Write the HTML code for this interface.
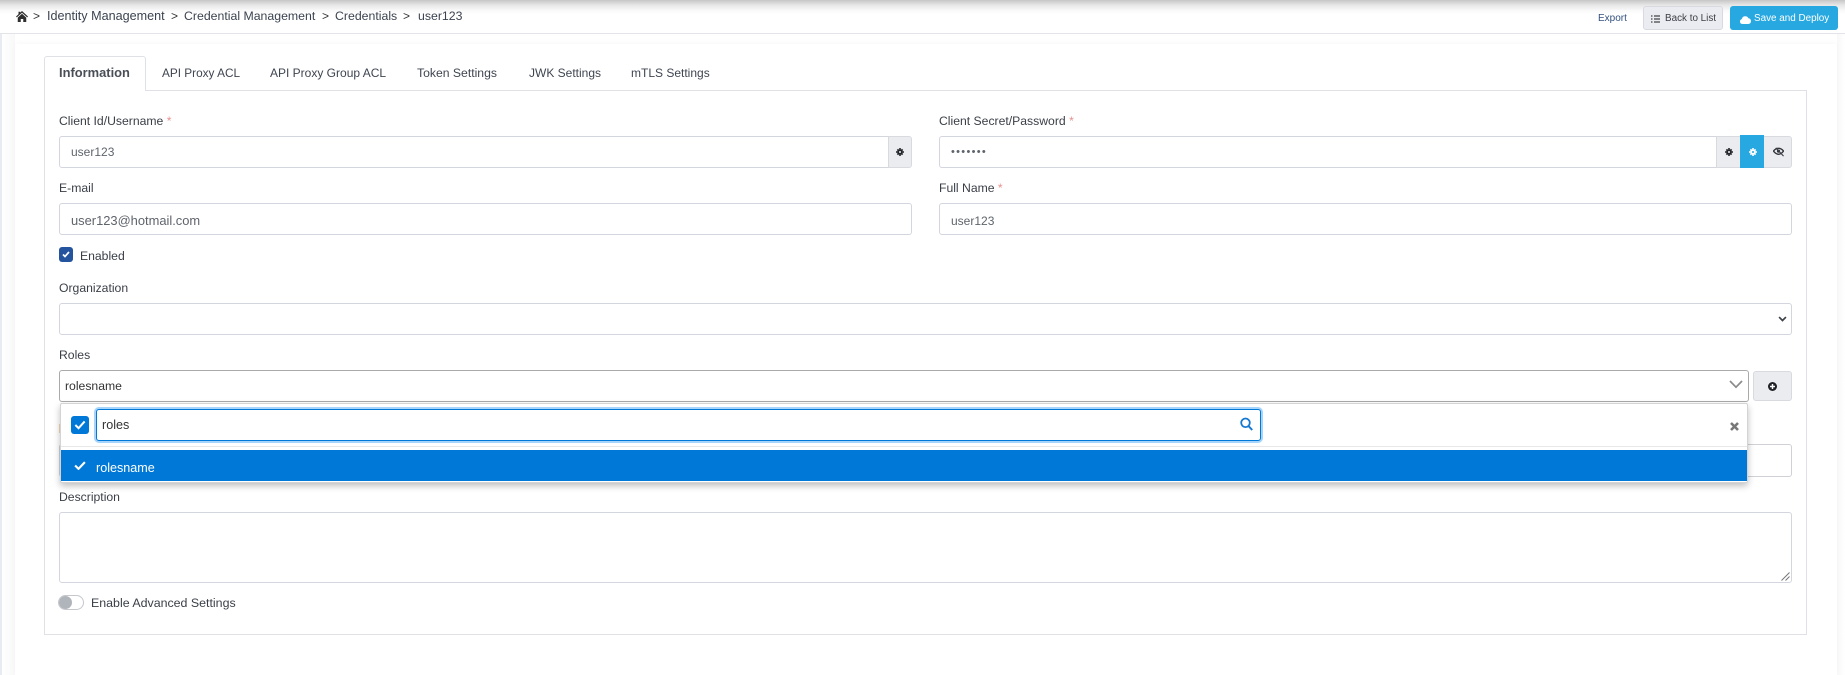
<!DOCTYPE html>
<html lang="en">
<head>
<meta charset="utf-8">
<title>Credentials</title>
<style>
html,body{margin:0;padding:0;width:1845px;height:675px;overflow:hidden;background:#fff;font-family:"Liberation Sans",sans-serif;font-size:12.2px;color:#3a3f47}
*{box-sizing:border-box}
.a{position:absolute}
.t{position:absolute;white-space:nowrap;line-height:16px;height:16px}
.in{position:absolute;background:#fff;border:1px solid #d3d6de;border-radius:3px}
.addon{position:absolute;background:#ebecf0;border:1px solid #d8dae0}
svg{position:absolute;display:block}
.req{color:#e8908f}
.val{color:#5f646c}
</style>
</head>
<body>
<div class="a" style="left:0;top:0;width:1845px;height:14px;background:linear-gradient(#c6c6c6,#e6e6e6 5px,#f8f8f8 10px,#fff)"></div>
<div class="a" style="left:0;top:33px;width:1845px;height:1px;background:#e2e4ea"></div>
<div class="a" style="left:0;top:34px;width:2px;height:641px;background:#e9ebf3"></div>
<div class="a" style="left:2px;top:34px;width:13px;height:641px;background:linear-gradient(90deg,#fff,#f8f8f8)"></div>
<div class="a" style="left:1837px;top:34px;width:8px;height:641px;background:linear-gradient(90deg,#f8f8f8,#fff)"></div>
<div class="a" style="left:15px;top:44px;width:1822px;height:631px;background:#fff;border-radius:3px 3px 0 0;box-shadow:0 -2px 5px rgba(0,0,0,.025)"></div>

<!-- breadcrumb -->
<svg style="left:16px;top:11px" width="12" height="11" viewBox="0 0 24 22"><path fill="#2f2f2f" d="M12 0 8.5 3.2V1.500H5V6.400L0 11l1.600 1.800L12 3.400l10.400 9.400L24 11Z M12 5.600 3.500 13.200V22h6v-6h5v6h6v-8.800Z"/></svg>
<div class="t" style="left:33px;top:8px;font-size:12px;color:#333">&gt;</div>
<div class="t" style="left:47px;top:8px;font-size:12.6px;color:#3b4350">Identity Management</div>
<div class="t" style="left:171px;top:8px;font-size:12px;color:#333">&gt;</div>
<div class="t" style="left:184px;top:8px;font-size:12.3px;color:#3b4350">Credential Management</div>
<div class="t" style="left:322px;top:8px;font-size:12px;color:#333">&gt;</div>
<div class="t" style="left:335px;top:8px;font-size:12.3px;color:#3b4350">Credentials</div>
<div class="t" style="left:403px;top:8px;font-size:12px;color:#333">&gt;</div>
<div class="t" style="left:418px;top:8px;font-size:12.3px;color:#3b4350">user123</div>

<!-- top actions -->
<div class="t" style="left:1598px;top:11px;font-size:10px;color:#33507f">Export</div>
<div class="a" style="left:1643px;top:6px;width:80px;height:24px;background:#ebecf1;border:1px solid #d8dae0;border-radius:3px"></div>
<svg style="left:1651px;top:15px" width="9" height="8" viewBox="0 0 9 8"><path fill="none" stroke="#444" stroke-width="1.300" d="M0 1h1.500M3 1h6M0 4h1.500M3 4h6M0 7h1.500M3 7h6"/></svg>
<div class="t" style="left:1665px;top:11px;font-size:9.9px;color:#3b3f46">Back to List</div>
<div class="a" style="left:1730px;top:6px;width:108px;height:24px;background:#27a8e0;border-radius:3px"></div>
<svg style="left:1740px;top:15px" width="11" height="9" viewBox="0 0 22 18"><path fill="#fff" d="M5 18A5 5 0 0 1 3.600 8.200 7 7 0 0 1 16.800 6.500 5.800 5.800 0 0 1 17 18Z"/></svg>
<div class="t" style="left:1754px;top:11px;font-size:9.9px;color:#fff">Save and Deploy</div>

<!-- tabs -->
<div class="a" style="left:44px;top:90px;width:1763px;height:545px;border:1px solid #dfe1e6"></div>
<div class="a" style="left:44px;top:56px;width:102px;height:35px;background:#fff;border:1px solid #dfe1e6;border-bottom:0;border-radius:3px 3px 0 0"></div>
<div class="t" style="left:59px;top:65px;font-weight:bold;color:#4a4f57;font-size:12.9px">Information</div>
<div class="t" style="left:162px;top:65px;font-size:11.8px;color:#3f4550">API Proxy ACL</div>
<div class="t" style="left:270px;top:65px;font-size:12px;color:#3f4550">API Proxy Group ACL</div>
<div class="t" style="left:417px;top:65px;color:#3f4550">Token Settings</div>
<div class="t" style="left:529px;top:65px;font-size:12px;color:#3f4550">JWK Settings</div>
<div class="t" style="left:631px;top:65px;font-size:12px;color:#3f4550">mTLS Settings</div>

<!-- row 1 -->
<div class="t" style="left:59px;top:113px">Client Id/Username <span class="req">*</span></div>
<div class="in" style="left:59px;top:136px;width:830px;height:32px;border-radius:3px 0 0 3px"></div>
<div class="t val" style="left:71px;top:144px;font-size:12px">user123</div>
<div class="addon" style="left:888px;top:136px;width:24px;height:32px;border-radius:0 3px 3px 0"></div>
<svg style="left:896px;top:148px" width="8" height="8" viewBox="0 0 20 20"><g fill="#22252a"><circle cx="10" cy="10" r="6.600"/><path d="M8 0h4v4H8zM8 16h4v4H8zM0 8h4v4H0zM16 8h4v4h-4zM2 5l3-3 3 3-3 3zM12 5l3-3 3 3-3 3zM2 15l3-3 3 3-3 3zM12 15l3-3 3 3-3 3z"/></g><circle cx="10" cy="10" r="2.600" fill="#ebecf0"/></svg>

<div class="t" style="left:939px;top:113px">Client Secret/Password <span class="req">*</span></div>
<div class="in" style="left:939px;top:136px;width:778px;height:32px;border-radius:3px 0 0 3px;border-right-color:#a9adb6"></div>
<div class="t val" style="left:951px;top:144px;font-size:11px;letter-spacing:1.300px">•••••••</div>
<div class="addon" style="left:1716px;top:136px;width:24px;height:32px;border-radius:0;border-right:0"></div>
<div class="a" style="left:1740px;top:135px;width:24px;height:33px;background:#27a8e0"></div>
<div class="addon" style="left:1764px;top:136px;width:28px;height:32px;border-radius:0 3px 3px 0;border-left:0"></div>
<svg style="left:1725px;top:148px" width="8" height="8" viewBox="0 0 20 20"><g fill="#22252a"><circle cx="10" cy="10" r="6.600"/><path d="M8 0h4v4H8zM8 16h4v4H8zM0 8h4v4H0zM16 8h4v4h-4zM2 5l3-3 3 3-3 3zM12 5l3-3 3 3-3 3zM2 15l3-3 3 3-3 3zM12 15l3-3 3 3-3 3z"/></g><circle cx="10" cy="10" r="2.600" fill="#ebecf0"/></svg>
<svg style="left:1749px;top:148px" width="8" height="8" viewBox="0 0 20 20"><g fill="#fff"><circle cx="10" cy="10" r="6.600"/><path d="M8 0h4v4H8zM8 16h4v4H8zM0 8h4v4H0zM16 8h4v4h-4zM2 5l3-3 3 3-3 3zM12 5l3-3 3 3-3 3zM2 15l3-3 3 3-3 3zM12 15l3-3 3 3-3 3z"/></g><circle cx="10" cy="10" r="2.600" fill="#27a8e0"/></svg>
<svg style="left:1773px;top:147px" width="11" height="10" viewBox="0 0 24 20"><path fill="none" stroke="#33363c" stroke-width="3" d="M1 8C5 3 9 2 12 2s7 1 11 6c-4 5-8 7-11 7S5 13 1 8Z"/><circle cx="12" cy="8" r="3.500" fill="#33363c"/><path stroke="#ebecf0" stroke-width="1.600" d="M5 0 21 16"/><path stroke="#33363c" stroke-width="2.400" d="M6 1 23 19"/></svg>

<!-- row 2 -->
<div class="t" style="left:59px;top:180px">E-mail</div>
<div class="in" style="left:59px;top:203px;width:853px;height:32px"></div>
<div class="t val" style="left:71px;top:213px;font-size:12.9px">user123@hotmail.com</div>
<div class="t" style="left:939px;top:180px">Full Name <span class="req">*</span></div>
<div class="in" style="left:939px;top:203px;width:853px;height:32px"></div>
<div class="t val" style="left:951px;top:213px;font-size:12px">user123</div>

<!-- enabled -->
<div class="a" style="left:59px;top:247px;width:14px;height:15px;background:#24549d;border-radius:3px"></div>
<svg style="left:62px;top:251px" width="8" height="7" viewBox="0 0 16 14"><path fill="none" stroke="#fff" stroke-width="3.400" d="M2 7l4 4 8-9"/></svg>
<div class="t" style="left:80px;top:248px">Enabled</div>

<!-- organization -->
<div class="t" style="left:59px;top:280px">Organization</div>
<div class="in" style="left:59px;top:303px;width:1733px;height:32px"></div>
<svg style="left:1778px;top:316px" width="9" height="6" viewBox="0 0 20 14"><path fill="none" stroke="#3e4249" stroke-width="4" d="M2 2.500l8 8 8-8"/></svg>

<!-- roles -->
<div class="t" style="left:59px;top:347px">Roles</div>
<div class="a" style="left:59px;top:370px;width:1690px;height:32px;background:#fff;border:1px solid #aaa;border-radius:3px"></div>
<div class="t" style="left:65px;top:378px;color:#333">rolesname</div>
<svg style="left:1729px;top:380px" width="14" height="9" viewBox="0 0 14 9"><path fill="none" stroke="#8a8a8a" stroke-width="1.700" d="M1 1l6 6.200L13 1"/></svg>
<div class="addon" style="left:1753px;top:371px;width:39px;height:30px;border-radius:3px"></div>
<svg style="left:1768px;top:382px" width="9" height="9" viewBox="0 0 22 22"><circle cx="11" cy="11" r="11" fill="#1f2227"/><path stroke="#fff" stroke-width="3.500" d="M11 5v12M5 11h12"/></svg>

<!-- hidden field behind dropdown -->
<div class="a" style="left:59px;top:424px;width:2px;height:9px;background:#f5d9ae"></div>
<div class="in" style="left:59px;top:444px;width:1733px;height:33px;border-color:#cfd1d6"></div>

<!-- dropdown -->
<div class="a" style="left:60px;top:403px;width:1688px;height:80px;background:#fff;border:1px solid #d4d4d4;border-radius:2px;box-shadow:0 3px 7px rgba(0,0,0,.25)"></div>
<div class="a" style="left:71px;top:416px;width:18px;height:18px;background:#0078d7;border-radius:3px"></div>
<svg style="left:74px;top:420px" width="12" height="10" viewBox="0 0 16 14"><path fill="none" stroke="#fff" stroke-width="2.800" d="M1.500 7l4.500 4.500L14.500 2"/></svg>
<div class="a" style="left:96px;top:409px;width:1165px;height:32px;background:#fff;border:1px solid #0078d7;border-radius:3px;box-shadow:0 0 0 2px #a6d4fa"></div>
<div class="t" style="left:102px;top:417px;font-size:12.6px;color:#333">roles</div>
<svg style="left:1240px;top:417px" width="13" height="14" viewBox="0 0 13 14"><circle cx="5.500" cy="5.800" r="4.300" fill="none" stroke="#1679d0" stroke-width="1.800"/><path stroke="#1679d0" stroke-width="2" d="M8.500 9l3.700 4"/></svg>
<svg style="left:1730px;top:422px" width="9" height="9" viewBox="0 0 9 9"><path stroke="#777" stroke-width="2.600" d="M1 1l7 7M8 1l-7 7"/></svg>
<div class="a" style="left:61px;top:446px;width:1686px;height:1px;background:#e8e8e8"></div>
<div class="a" style="left:61px;top:450px;width:1686px;height:31px;background:#0078d7"></div>
<svg style="left:74px;top:461px" width="12" height="9" viewBox="0 0 16 12"><path fill="none" stroke="#fff" stroke-width="2.800" d="M1.500 6l4.500 4.500L14.500 1.500"/></svg>
<div class="t" style="left:96px;top:460px;font-size:12.600px;color:#fff">rolesname</div>

<!-- description -->
<div class="t" style="left:59px;top:489px">Description</div>
<div class="in" style="left:59px;top:512px;width:1733px;height:71px"></div>
<svg style="left:1781px;top:572px" width="9" height="9" viewBox="0 0 9 9"><path stroke="#777" stroke-width="1" d="M8.500 0.500 0.500 8.500M8.500 4.500l-4 4"/></svg>

<!-- toggle -->
<div class="a" style="left:58px;top:595px;width:26px;height:15px;background:#fff;border:1px solid #c5c7cc;border-radius:8px"></div>
<div class="a" style="left:59px;top:596px;width:13px;height:13px;background:#b0b4bb;border-radius:50%"></div>
<div class="t" style="left:91px;top:595px;font-size:12.400px">Enable Advanced Settings</div>
</body>
</html>
